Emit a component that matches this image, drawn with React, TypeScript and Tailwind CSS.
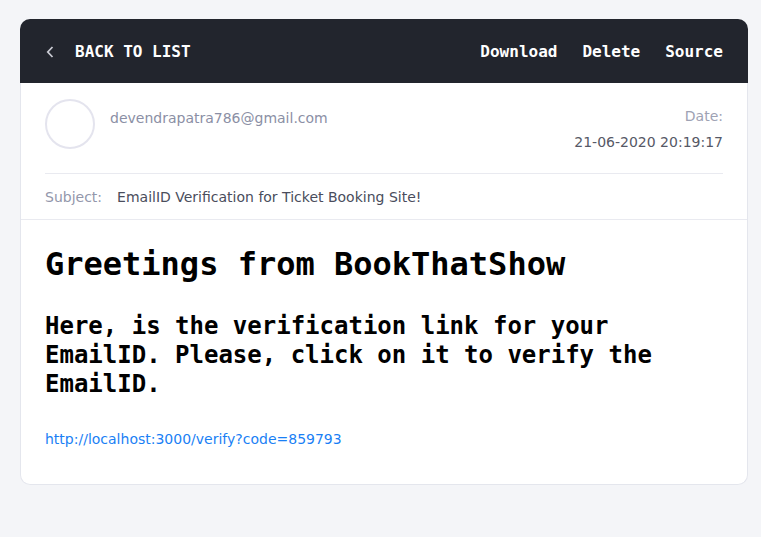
import React from "react";

export default function App() {
  const mono = { fontFamily: '"DejaVu Sans Mono", monospace' };
  return (
    <div
      className="min-h-[537px] w-full bg-[#f4f5f8] pt-[19px] px-[20px]"
      style={{ fontFamily: '"DejaVu Sans", sans-serif' }}
    >
      <div className="w-[728px]">
        {/* Header */}
        <div
          className="flex h-[64px] items-center justify-between rounded-t-[10px] bg-[#22252d] px-[25px] pt-[2px] text-[16px] font-bold leading-6 text-white"
          style={mono}
        >
          <div className="flex items-center">
            <svg width="8" height="12" viewBox="0 0 8 12" className="ml-[1px] mr-[21px]">
              <polyline points="6.5,1 1.8,6 6.5,11" fill="none" stroke="#c9cad2" strokeWidth="1.8" />
            </svg>
            <span>BACK TO LIST</span>
          </div>
          <div className="flex items-center gap-[25px]">
            <span>Download</span>
            <span>Delete</span>
            <span>Source</span>
          </div>
        </div>

        <div className="rounded-b-[10px] border-x border-b border-[#e4e6ed] bg-white">
          {/* Meta */}
          <div className="px-[24px]">
            <div className="pt-4 pb-6 border-b border-[#e9eaf0]">
              <div className="flex h-[50px] items-start justify-between">
                <div className="flex">
                  <div className="h-[50px] w-[50px] rounded-full border-2 border-[#e4e4ee]" />
                  <div className="ml-[15px] mt-[9px] text-[14px] leading-5 text-[#8b8fa5]">
                    devendrapatra786@gmail.com
                  </div>
                </div>
                <div className="mt-[7px] text-right text-[14px] leading-5">
                  <div className="text-[#9ea2b4]">Date:</div>
                  <div className="mt-[6px] text-[#565866]">21-06-2020 20:19:17</div>
                </div>
              </div>
            </div>
            <div className="flex h-[45px] items-center pt-[1px] text-[14px]">
              <span className="text-[#9397ab]">Subject:</span>
              <span className="ml-[15px] text-[#4a4d5c]">EmailID Verification for Ticket Booking Site!</span>
            </div>
          </div>

          {/* Body */}
          <div className="border-t border-[#e9eaf0] px-[24px] pt-[25px] pb-[34px]">
            <h1 className="text-[32px] font-bold leading-[1.2] text-black" style={mono}>
              Greetings from BookThatShow
            </h1>
            <h2 className="mt-[29px] text-[24px] font-bold leading-[1.2] text-black" style={mono}>
              Here, is the verification link for your EmailID. Please, click on it to verify the EmailID.
            </h2>
            <p className="mt-[30px] text-[14px] leading-[1.5]">
              <a className="text-[#1a7ff5]">http://localhost:3000/verify?code=859793</a>
            </p>
          </div>
        </div>
      </div>
    </div>
  );
}
